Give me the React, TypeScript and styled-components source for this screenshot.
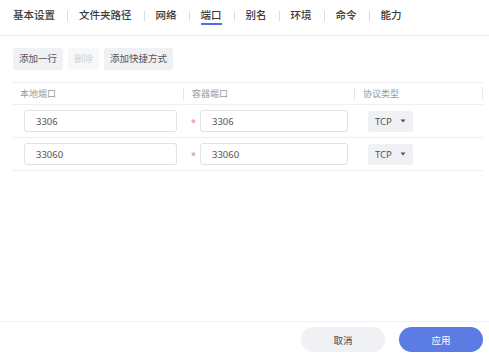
import React from 'react'
import styled, { createGlobalStyle } from 'styled-components'

const GlobalStyle = createGlobalStyle`
    html, body {
        margin: 0;
        padding: 0;
        background: #fff;
    }
    body {
        font-family: "Noto Sans", "Noto Sans CJK SC", sans-serif;
    }
`

const tabs = ['基本设置', '文件夹路径', '网络', '端口', '别名', '环境', '命令', '能力']

const rows = [
    { local: '3306', container: '3306', protocol: 'TCP' },
    { local: '33060', container: '33060', protocol: 'TCP' },
]

const Caret = () => (
    <svg width="6" height="4" viewBox="0 0 6 4">
        <path d="M0.5 0.5 L5.5 0.5 L3 3.5 Z" fill="#555" />
    </svg>
)

export default function App() {
    return (
        <>
            <GlobalStyle />
            <Page>
                <TabBar>
                    {tabs.map((t, i) => (
                        <React.Fragment key={t}>
                            {i > 0 && <TabDivider />}
                            <Tab $active={t === '端口'}>{t}</Tab>
                        </React.Fragment>
                    ))}
                </TabBar>
                <Body>
                    <Toolbar>
                        <ToolButton>添加一行</ToolButton>
                        <ToolButton disabled>删除</ToolButton>
                        <ToolButton>添加快捷方式</ToolButton>
                    </Toolbar>
                    <Table>
                        <HeaderRow>
                            <HeadCell $width={172}>本地端口</HeadCell>
                            <HeadCell $width={171}>容器端口</HeadCell>
                            <HeadCell $width={128}>协议类型</HeadCell>
                        </HeaderRow>
                        {rows.map((r, i) => (
                            <Row key={i}>
                                <Cell $width={172} $pl={12}>
                                    <Input defaultValue={r.local} />
                                </Cell>
                                <Cell $width={171} $pl={7}>
                                    <Required>*</Required>
                                    <Input defaultValue={r.container} />
                                </Cell>
                                <Cell $width={128} $pl={13}>
                                    <Select>
                                        {r.protocol}
                                        <Caret />
                                    </Select>
                                </Cell>
                            </Row>
                        ))}
                    </Table>
                </Body>
                <Footer>
                    <FooterButton>取消</FooterButton>
                    <FooterButton $primary>应用</FooterButton>
                </Footer>
            </Page>
        </>
    )
}

const Page = styled.div`
    width: 489px;
    height: 353px;
    display: flex;
    flex-direction: column;
    box-sizing: border-box;
    overflow: hidden;
`

const TabBar = styled.div`
    display: flex;
    align-items: flex-start;
    height: 36px;
    box-sizing: border-box;
    padding: 8px 0 0 13px;
    border-bottom: 1px solid #ececec;
`

const Tab = styled.div<{ $active?: boolean }>`
    font-size: 10.5px;
    line-height: 14px;
    font-weight: 500;
    color: #3a3a3a;
    padding-bottom: 1px;
    border-bottom: 2px solid ${(p) => (p.$active ? '#4f6fe3' : 'transparent')};
    white-space: nowrap;
`

const TabDivider = styled.div`
    width: 1px;
    height: 10px;
    background: #dcdcdc;
    margin: 3px 11px 0 12px;
`

const Body = styled.div`
    flex: 1;
    display: flex;
    flex-direction: column;
    padding: 12px 6px 0 12px;
`

const Toolbar = styled.div`
    display: flex;
    gap: 5px;
    padding-left: 1px;
    margin-bottom: 12px;
`

const ToolButton = styled.button`
    height: 22px;
    padding: 0 6px;
    border: none;
    border-radius: 3px;
    background: ${(p) => (p.disabled ? '#f7f8fa' : '#f0f1f5')};
    color: ${(p) => (p.disabled ? '#d0d2d8' : '#555')};
    font-family: "Noto Sans", "Noto Sans CJK SC", sans-serif;
    font-size: 9.5px;
    line-height: 22px;
    cursor: pointer;
`

const Table = styled.div`
    width: 471px;
    display: flex;
    flex-direction: column;
    border-top: 1px solid #efefef;
`

const HeaderRow = styled.div`
    display: flex;
    height: 21px;
    align-items: center;
    border-bottom: 1px solid #efefef;
`

const HeadCell = styled.div<{ $width: number }>`
    width: ${(p) => p.$width}px;
    box-sizing: border-box;
    padding-left: 8px;
    font-size: 9px;
    color: #999;
    border-right: 1px solid #e6e6e6;
    line-height: 12px;
    &:last-child {
        border-right-color: #ececec;
    }
`

const Row = styled.div`
    display: flex;
    height: 32px;
    align-items: center;
    border-bottom: 1px solid #efefef;
`

const Cell = styled.div<{ $width: number; $pl: number }>`
    width: ${(p) => p.$width}px;
    box-sizing: border-box;
    padding: 0 7px 0 ${(p) => p.$pl}px;
    display: flex;
    align-items: center;
`

const Required = styled.span`
    color: #f07c7c;
    font-size: 9px;
    width: 9px;
    flex-shrink: 0;
    margin-top: 2px;
`

const Input = styled.input`
    flex: 1;
    min-width: 0;
    height: 22px;
    box-sizing: border-box;
    border: 1px solid #dfe1e7;
    border-radius: 3px;
    padding: 0 11px;
    font-family: "Noto Sans", "Noto Sans CJK SC", sans-serif;
    font-size: 9.5px;
    color: #555;
    outline: none;
`

const Select = styled.div`
    width: 45px;
    height: 21px;
    box-sizing: border-box;
    padding: 0 7px;
    border-radius: 3px;
    background: #f0f1f5;
    display: flex;
    align-items: center;
    justify-content: space-between;
    font-size: 9.5px;
    color: #555;
`

const Footer = styled.div`
    height: 32px;
    box-sizing: border-box;
    border-top: 1px solid #f2f2f2;
    display: flex;
    justify-content: flex-end;
    align-items: flex-start;
    gap: 14px;
    padding: 5px 6px 0 0;
`

const FooterButton = styled.button<{ $primary?: boolean }>`
    width: 84px;
    height: 25px;
    border: none;
    border-radius: 13px;
    background: ${(p) => (p.$primary ? '#5b7ce2' : '#f0f1f5')};
    color: ${(p) => (p.$primary ? '#fff' : '#444')};
    font-family: "Noto Sans", "Noto Sans CJK SC", sans-serif;
    font-size: 9.5px;
    cursor: pointer;
`
